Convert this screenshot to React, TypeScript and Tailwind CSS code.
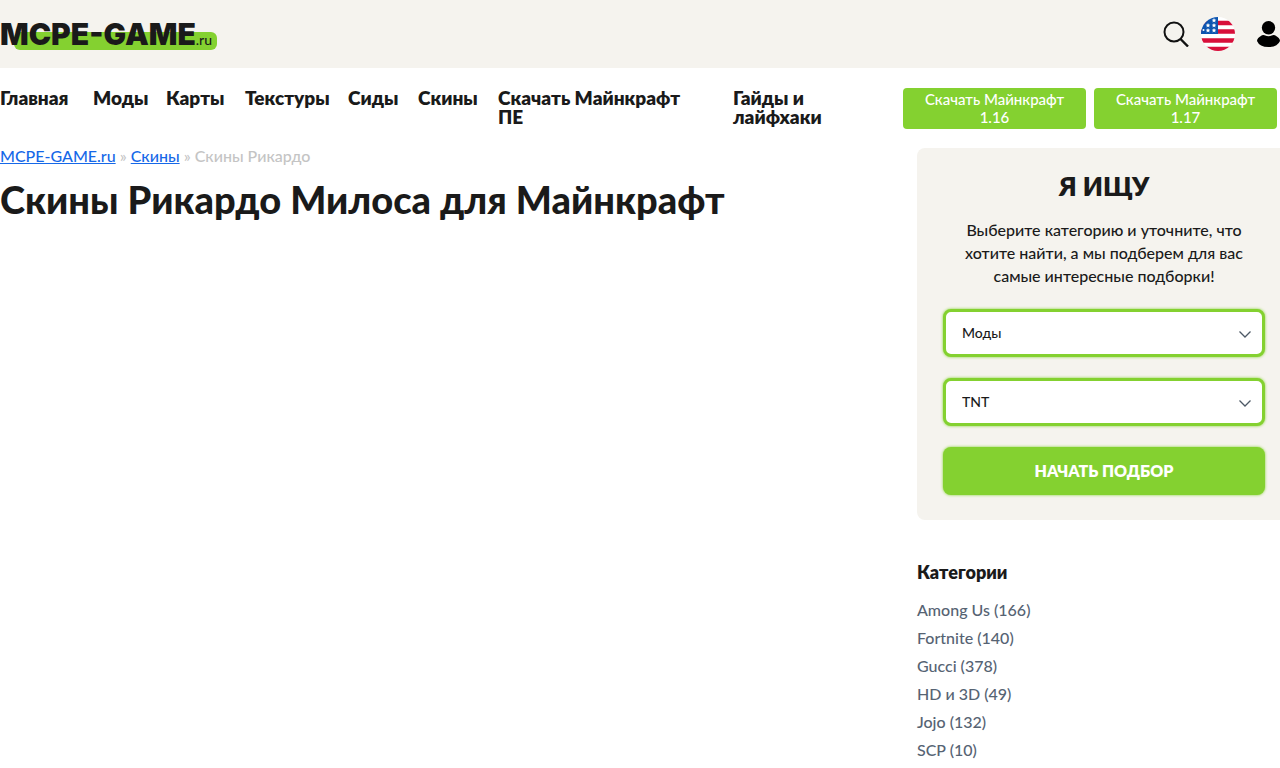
const menu = [
  { title: 'Главная', width: 'w-[72px]' },
  { title: 'Моды', width: 'w-[52px]' },
  { title: 'Карты', width: 'w-[58px]' },
  { title: 'Текстуры', width: 'w-[82px]' },
  { title: 'Сиды', width: 'w-[49px]' },
  { title: 'Скины', width: 'w-[59px]' },
  { title: 'Скачать Майнкрафт ПЕ', width: 'w-[214px] pr-4' },
  { title: 'Гайды и лайфхаки', width: 'w-[148px] pr-10' },
];

const downloads = ['1.16', '1.17'];

const categories = [
  { name: 'Among Us', count: 166 },
  { name: 'Fortnite', count: 140 },
  { name: 'Gucci', count: 378 },
  { name: 'HD и 3D', count: 49 },
  { name: 'Jojo', count: 132 },
  { name: 'SCP', count: 10 },
];

function Logo() {
  return (
    <a href="#" className="relative isolate flex h-8 w-[217px] items-baseline whitespace-nowrap leading-8 text-[#1a1a1a]">
      <span className="absolute right-0 bottom-0 left-3.5 -z-10 h-[18px] rounded-md bg-[#84d130]" aria-hidden />
      <span className="font-['Inter',sans-serif] text-[30px] font-black">MCPE-GAME</span>
      <span className="text-sm font-medium">.ru</span>
    </a>
  );
}

function SearchIcon() {
  return (
    <svg viewBox="0 0 26 26" className="size-[26px]" fill="none" stroke="#111" strokeWidth="2" aria-hidden>
      <circle cx="11" cy="11" r="9.5" />
      <path d="M17.5 18 25 25.500" strokeWidth="2.4" />
    </svg>
  );
}

function FlagIcon() {
  return (
    <svg viewBox="0 0 34 34" className="size-[34px]" aria-hidden>
      <defs>
        <clipPath id="flag">
          <circle cx="17" cy="17" r="17" />
        </clipPath>
      </defs>
      <g clipPath="url(#flag)">
        <path fill="#fff" d="M0 0h34v34H0z" />
        <path stroke="#d80f3a" strokeWidth="4.400" d="M0 6h34M0 14.500h34M0 23.500h34M0 32h34" />
        <path fill="#0d55b0" d="M0 0h17v17H0z" />
        <g fill="#fff">
          <path d="m13 1 .7 1.500 1.600.2-1.200 1.100.3 1.600-1.400-.8-1.400.8.3-1.600-1.200-1.100 1.600-.2z" />
          <path d="m7 6 .7 1.500 1.600.2-1.200 1.100.3 1.600-1.400-.8-1.400.8.3-1.600L4.700 7.700l1.600-.2z" />
          <path d="m13 6 .7 1.500 1.600.2-1.200 1.100.3 1.600-1.400-.8-1.400.8.3-1.600-1.200-1.100 1.600-.2z" />
          <path d="m7 11 .7 1.500 1.600.2-1.200 1.100.3 1.600-1.400-.8-1.400.8.3-1.600-1.200-1.100 1.600-.2z" />
          <path d="m13 11 .7 1.500 1.600.2-1.200 1.100.3 1.600-1.400-.8-1.400.8.3-1.600-1.200-1.100 1.600-.2z" />
          <circle cx="2.500" cy="13" r="1" />
        </g>
      </g>
    </svg>
  );
}

function UserIcon() {
  return (
    <svg viewBox="0 0 23 26" className="h-[26px] w-[23px]" aria-hidden>
      <circle cx="11.500" cy="6.700" r="6.700" />
      <path d="M5 14.200Q7 13.500 8.200 14.500q3.300 1.500 6.600 0Q16 13.500 18 14.200 23 17 23 20 20.500 26 11.500 26T0 20Q0 17 5 14.200z" />
    </svg>
  );
}

function Select({ label, options }: { label: string; options: string[] }) {
  return (
    <div className="relative">
      <select
        aria-label={label}
        className="block h-12 w-full appearance-none rounded-lg border-3 border-[#84d130] bg-white px-4 text-sm font-medium text-[#1a1a1a] shadow-[0_0_3px_#84d130]"
      >
        {options.map((option) => (
          <option key={option}>{option}</option>
        ))}
      </select>
      <svg
        viewBox="0 0 12 7"
        className="pointer-events-none absolute top-[22px] right-3.5 h-[7px] w-3"
        fill="none"
        stroke="#4d5966"
        strokeWidth="1.3"
        aria-hidden
      >
        <path d="m.5.5 5.500 5.500L11.500.5" />
      </svg>
    </div>
  );
}

export default function App() {
  return (
    <div className="min-h-screen overflow-hidden bg-white font-['Lato','Open_Sans',sans-serif] text-[#1a1a1a]">
      <header className="flex h-[68px] items-center justify-between bg-[#f5f3ee]">
        <Logo />
        <div className="flex items-center">
          <button type="button" aria-label="Поиск" className="mr-3">
            <SearchIcon />
          </button>
          <a href="#" aria-label="English" className="mr-[22px]">
            <FlagIcon />
          </a>
          <a href="#" aria-label="Войти">
            <UserIcon />
          </a>
        </div>
      </header>

      <div className="flex items-start justify-between pt-5 pr-[3px]">
        <nav className="flex gap-[21px] text-[19px] leading-[19px] font-extrabold">
          {menu.map((item) => (
            <a key={item.title} href="#" className={`${item.width} shrink-0`}>
              {item.title}
            </a>
          ))}
        </nav>
        <div className="flex gap-2">
          {downloads.map((version) => (
            <a
              key={version}
              href="#"
              className="flex h-[41px] w-[183px] items-center justify-center rounded bg-[#84d130] px-4 pb-0.5 text-center text-[15px] leading-[18px] font-medium text-white"
            >
              Скачать Майнкрафт {version}
            </a>
          ))}
        </div>
      </div>

      <div className="mt-[19px] flex items-start">
        <main className="min-w-0 flex-1">
          <div className="text-base leading-4 font-medium text-[#c4c4c4]">
            <a href="#" className="text-[#1668e8] underline">MCPE-GAME.ru</a>
            {' » '}
            <a href="#" className="text-[#1668e8] underline">Скины</a>
            {' » Скины Рикардо'}
          </div>
          <h1 className="mt-3 text-[38px] leading-[46px] font-black">Скины Рикардо Милоса для Майнкрафт</h1>
        </main>

        <aside className="w-[363px] shrink-0">
          <form className="rounded-l-lg bg-[#f5f3ee] pt-[22px] pr-[15px] pb-[25px] pl-[26px]">
            <h2 className="text-center text-[26px] leading-8 font-extrabold">Я ИЩУ</h2>
            <p className="mt-4 mb-[22px] px-3 text-center text-base leading-[23px] font-medium">
              Выберите категорию и уточните, что хотите найти, а мы подберем для вас самые интересные подборки!
            </p>
            <div className="flex flex-col gap-[21px]">
              <Select label="Категория" options={['Моды', 'Карты', 'Текстуры', 'Сиды', 'Скины']} />
              <Select label="Подборка" options={['TNT']} />
              <button
                type="button"
                className="h-12 rounded-lg bg-[#84d130] text-base font-extrabold text-white shadow-[0_0_3px_#84d130]"
              >
                НАЧАТЬ ПОДБОР
              </button>
            </div>
          </form>

          <h3 className="mt-10 text-lg leading-6 font-extrabold">Категории</h3>
          <ul className="mt-3 text-base leading-7 font-medium text-[#566373]">
            {categories.map((category) => (
              <li key={category.name}>
                <a href="#">
                  {category.name} ({category.count})
                </a>
              </li>
            ))}
          </ul>
        </aside>
      </div>
    </div>
  );
}
